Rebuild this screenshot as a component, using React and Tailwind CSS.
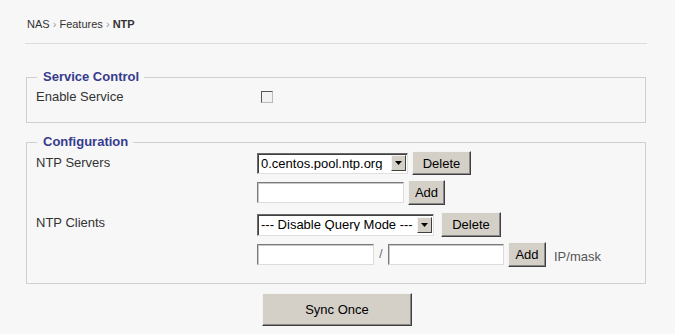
import React from 'react';

const FONT = { fontFamily: '"Liberation Sans", Arial, sans-serif' };

function Button({ children, className = '' }) {
  return (
    <button
      className={`flex items-center justify-center bg-[#d4d0c8] text-black text-[13px] leading-none border border-t-[#f4f4f4] border-l-[#f4f4f4] border-r-[#404040] border-b-[#404040] shadow-[inset_-1px_-1px_0_#888] ${className}`}>
      {children}
    </button>
  );
}

function TextBox({ className = '' }) {
  return (
    <div className={`bg-white border border-t-[#7a7a7a] border-l-[#7a7a7a] border-r-[#dcdcdc] border-b-[#dcdcdc] shadow-[inset_1px_1px_0_#c8c8c8] ${className}`} />
  );
}

function Select({ value, className = '' }) {
  return (
    <div className={`flex items-center bg-white border border-t-[#6a6a6a] border-l-[#6a6a6a] border-r-[#e0e0e0] border-b-[#e0e0e0] shadow-[inset_1px_1px_0_#404040] ${className}`}>
      <span className="flex-1 pl-[3px] text-[13px] leading-none text-black whitespace-nowrap overflow-hidden">{value}</span>
      <span className="flex items-center justify-center w-[15px] h-[16px] mr-[1px] bg-[#d4d0c8] border border-t-[#f4f4f4] border-l-[#f4f4f4] border-r-[#404040] border-b-[#404040]">
        <svg width="7" height="4" viewBox="0 0 7 4"><path d="M0 0h7L3.5 4z" fill="#000" /></svg>
      </span>
    </div>
  );
}

function Legend({ children }) {
  return (
    <legend className="ml-[1px] px-[6px] pr-[5px] text-[13px] leading-[16px] font-bold text-[#363b8e]">
      {children}
    </legend>
  );
}

export default function App() {
  return (
    <div className="w-[675px] h-[334px] bg-[#f7f7f7] text-[#333] overflow-hidden" style={FONT}>
      <div className="pl-[27px] pt-[17px] text-[11px] leading-[14px] text-[#333]">
        NAS <span className="text-[#999]">›</span> Features <span className="text-[#999]">›</span> <span className="font-bold">NTP</span>
      </div>
      <div className="ml-[25px] mt-[12px] w-[622px] border-t border-[#dcdcdc]" />

      <fieldset className="ml-[26px] mt-[25px] w-[620px] border border-[#cfcfcf] pl-[9px] pb-[18px]">
        <Legend>Service Control</Legend>
        <div className="flex items-center mt-[4px] h-[15px] text-[13px] leading-[15px]">
          <span className="w-[221px]">Enable Service</span>
          <span className="ml-[4px] w-[12px] h-[12px] bg-[#f2f2f2] border border-t-[#555] border-l-[#555] border-r-[#bbb] border-b-[#bbb]" />
        </div>
      </fieldset>

      <fieldset className="ml-[26px] mt-[11px] w-[620px] border border-[#cfcfcf] pl-[9px] pb-[16px]">
        <Legend>Configuration</Legend>
        <div className="flex mt-[1px] text-[13px] leading-[15px]">
          <span className="w-[221px] pt-[4px]">NTP Servers</span>
          <div className="flex flex-col">
            <div className="flex items-center h-[24px]">
              <Select value="0.centos.pool.ntp.org" className="w-[151px] h-[21px]" />
              <Button className="ml-[4px] w-[59px] h-[24px]">Delete</Button>
            </div>
            <div className="flex items-center h-[25px] mt-[5px]">
              <TextBox className="w-[147px] h-[21px]" />
              <Button className="ml-[4px] w-[37px] h-[25px]">Add</Button>
            </div>
          </div>
        </div>
        <div className="flex mt-[7px] text-[13px] leading-[15px]">
          <span className="w-[221px] pt-[3px]">NTP Clients</span>
          <div className="flex flex-col">
            <div className="flex items-center h-[25px]">
              <Select value="--- Disable Query Mode ---" className="w-[177px] h-[22px]" />
              <Button className="ml-[7px] w-[60px] h-[25px]">Delete</Button>
            </div>
            <div className="flex items-center h-[25px] mt-[5px]">
              <TextBox className="w-[117px] h-[21px]" />
              <span className="w-[14px] text-center text-[#666] text-[12px]">/</span>
              <TextBox className="w-[116px] h-[21px]" />
              <Button className="ml-[4px] w-[38px] h-[25px]">Add</Button>
              <span className="ml-[8px] pt-[4px] text-[#555]">IP/mask</span>
            </div>
          </div>
        </div>
      </fieldset>

      <div className="flex w-[674px] justify-center mt-[9px]">
        <Button className="w-[150px] h-[33px]">Sync Once</Button>
      </div>
    </div>
  );
}
